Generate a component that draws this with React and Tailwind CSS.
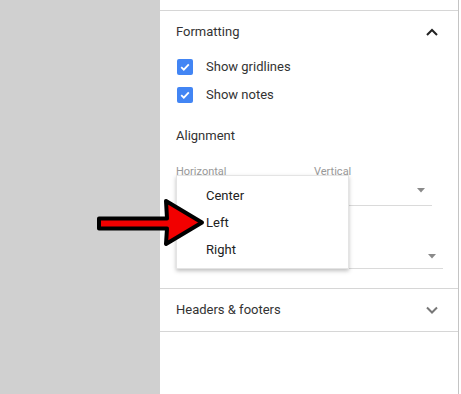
import React from "react";

const font = { fontFamily: "Roboto, 'Liberation Sans', Arial, sans-serif" };

function Check() {
  return (
    <span className="flex h-[16px] w-[16px] items-center justify-center rounded-[2px] bg-[#4285f4]">
      <svg width="12" height="12" viewBox="0 0 12 12">
        <path d="M2.2 6.2 L4.8 8.7 L9.8 3.4" fill="none" stroke="#fff" strokeWidth="1.8" />
      </svg>
    </span>
  );
}

function Caret() {
  return (
    <svg width="8" height="5" viewBox="0 0 8 5">
      <path d="M0 0 L8 0 L4 4.5 Z" fill="#8a8a8a" />
    </svg>
  );
}

function Chevron({ up, color }) {
  return (
    <svg width="12" height="8" viewBox="0 0 12 8">
      <path
        d={up ? "M1 7 L6 2 L11 7" : "M1 1.5 L6 6.5 L11 1.5"}
        fill="none"
        stroke={color}
        strokeWidth="2"
      />
    </svg>
  );
}

export default function App() {
  return (
    <div className="relative flex h-[394px] w-[461px] overflow-hidden bg-white" style={font}>
      <div className="w-[160px] shrink-0 bg-[#d0d0d0]" />
      <div className="relative w-[299px] shrink-0 border-r border-[#c4c4c4] bg-white text-[13px] text-[#333]">
        <div className="h-[11px] border-b border-[#d6d6d6]" />

        <div className="flex h-[42px] items-center justify-between pl-[16px] pr-[20px]">
          <span>Formatting</span>
          <Chevron up color="#222" />
        </div>

        <div className="flex h-[28px] items-center gap-[13px] pl-[17px]">
          <Check />
          <span>Show gridlines</span>
        </div>
        <div className="flex h-[28px] items-center gap-[13px] pl-[17px]">
          <Check />
          <span>Show notes</span>
        </div>

        <div className="mt-[13px] flex h-[28px] items-center pl-[16px]">Alignment</div>

        <div className="mt-[15px] flex pl-[16px] text-[11px] leading-[14px] text-[#999]">
          <span className="w-[138px]">Horizontal</span>
          <span>Vertical</span>
        </div>
        <div className="flex pl-[16px]">
          <div className="mr-[18px] h-[27px] w-[120px] border-b border-[#dadada]" />
          <div className="flex h-[27px] w-[118px] items-start justify-end border-b border-[#dadada] pr-[7px] pt-[9px]">
            <Caret />
          </div>
        </div>

        <div className="ml-[16px] mt-[29px] flex h-[34px] w-[267px] items-start justify-end border-b border-[#dadada] pr-[7px] pt-[19px]">
          <Caret />
        </div>

        <div className="mt-[19px] h-[1px] bg-[#d6d6d6]" />
        <div className="flex h-[43px] items-center justify-between border-b border-[#d6d6d6] pl-[16px] pr-[20px]">
          <span>Headers &amp; footers</span>
          <Chevron color="#777" />
        </div>

        <div className="absolute left-[16px] top-[175px] h-[94px] w-[173px] border border-[#e4e4e4] bg-white pt-[6px] text-[#222] shadow-[0_2px_4px_rgba(0,0,0,0.25)]">
          {["Center", "Left", "Right"].map((t) => (
            <div key={t} className="flex h-[27px] items-center pl-[29px]">
              {t}
            </div>
          ))}
        </div>
      </div>

      <svg className="absolute left-[92px] top-[194px]" width="116" height="56" viewBox="92 194 116 56">
        <path
          d="M99 218.5 L167 218.5 L166 201 L202 222.5 L166 244 L167 228.5 L99 228.5 Z"
          fill="#f20000"
          stroke="#000"
          strokeWidth="4"
          strokeLinejoin="round"
        />
      </svg>
    </div>
  );
}
